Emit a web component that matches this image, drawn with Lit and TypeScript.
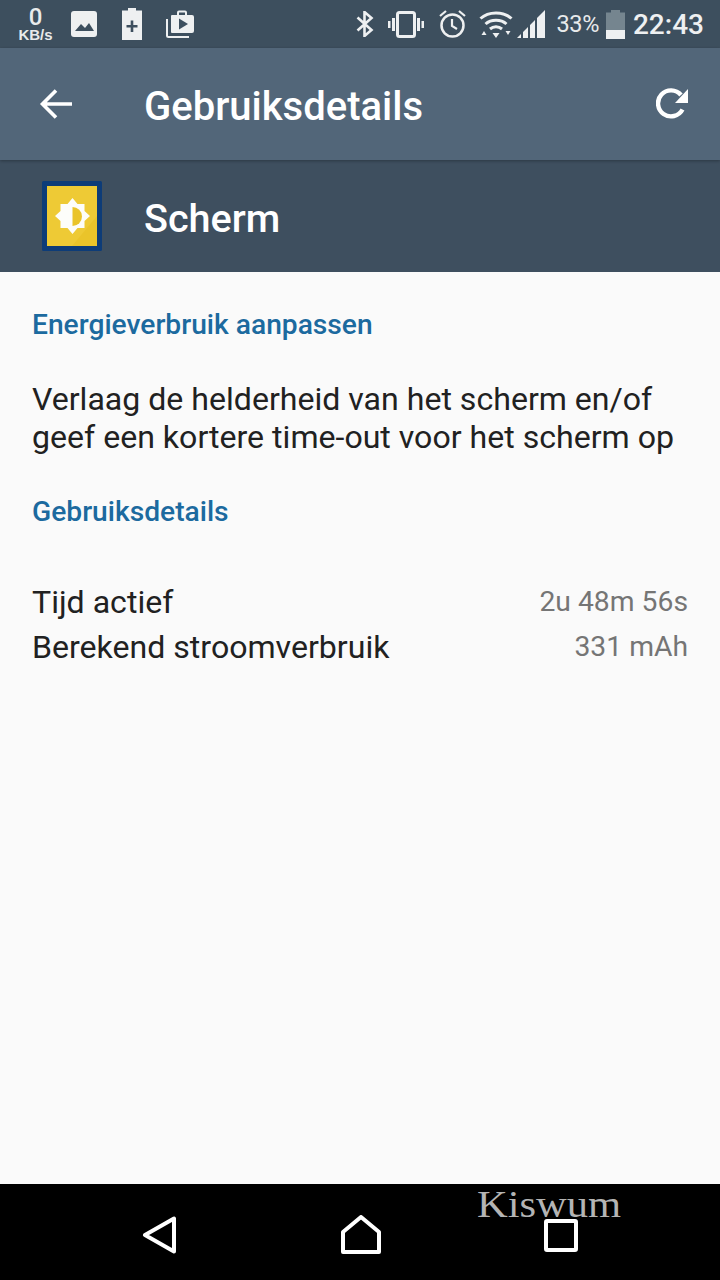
import { LitElement, html, css } from "lit";
import { customElement } from "lit/decorators.js";

@customElement("app-root")
export class AppRoot extends LitElement {
  static styles = css`
    :host { display: block; width: 720px; height: 1280px; font-family: Roboto, "Noto Sans", sans-serif; background: #fafafa; }
    .page { display: flex; flex-direction: column; height: 1280px; position: relative; overflow: hidden; }
    svg { display: block; flex: none; }
    .status { height: 48px; flex: none; background: #3d4f5e; color: #eef0f1; display: flex; align-items: center; padding-left: 18px; padding-right: 16px; box-sizing: border-box; }
    .speed { width: 35px; display: flex; flex-direction: column; align-items: center; color: #e8eaeb; }
    .speed b { font-size: 24px; line-height: 20px; font-weight: 500; }
    .speed span { font-family: "Liberation Sans", Arial, sans-serif; font-size: 15px; line-height: 15px; font-weight: 700; }
    .i1 { margin-left: 18px; }
    .i2 { margin-left: 25px; }
    .i3 { margin-left: 24px; }
    .spacer { flex: 1; }
    .i5 { margin-left: 14px; }
    .i6 { margin-left: 15px; }
    .i7 { margin-left: 13px; }
    .i8 { margin-left: 4px; }
    .pct { margin-left: 12px; font-size: 23.5px; letter-spacing: -0.4px; color: #e8eaeb; }
    .i9 { margin-left: 7px; }
    .clock { margin-left: 8px; font-size: 28px; font-weight: 500; color: #eef0f1; }
    .toolbar { height: 112px; flex: none; background: #526679; display: flex; align-items: center; color: #fff; box-sizing: border-box; padding: 0 30px 0 38px; box-shadow: 0 1px 3px rgba(0,0,0,.3); position: relative; }
    .toolbar h1 { margin: 0 0 0 70px; flex: 1; font-size: 40px; line-height: 48px; padding-top: 6px; font-weight: 500; }
    .sub { height: 112px; flex: none; background: #3e4f5f; display: flex; align-items: center; padding-left: 42px; color: #fff; }
    .sub h2 { margin: 0 0 0 42px; font-size: 39.6px; line-height: 48px; padding-top: 6px; font-weight: 500; }
    .content { flex: 1; padding: 36px 32px 0; background: #fafafa; color: #212121; }
    .head { font-size: 28.2px; line-height: 33px; font-weight: 500; color: #1c6a9f; }
    .desc { margin-top: 39px; font-size: 32.1px; line-height: 38px; }
    .head2 { margin-top: 39px; }
    .rows { margin-top: 51px; display: flex; flex-direction: column; }
    .row { display: flex; justify-content: space-between; align-items: center; height: 45px; font-size: 32.1px; }
    .row span:last-child { font-size: 28.3px; color: #757575; }
    .nav { height: 96px; flex: none; background: #000; position: relative; display: flex; align-items: center; padding-left: 142px; padding-top: 6px; box-sizing: border-box; }
    .nav .home { margin-left: 163px; }
    .nav .recent { margin-left: 163px; }
    .mark { position: absolute; left: 477px; top: 0; font-family: "Liberation Serif", "Times New Roman", serif; font-size: 37px; line-height: 42px; color: #b4b4b4; transform: scaleX(1.15); transform-origin: left center; }
  `;

  render() {
    return html`<div class="page">
      <div class="status">
        <div class="speed"><b>0</b><span>KB/s</span></div>
        <svg class="i1" width="26" height="26" viewBox="0 0 26 26"><path fill="#eef0f1" d="M3 0h20a3 3 0 0 1 3 3v20a3 3 0 0 1-3 3H3a3 3 0 0 1-3-3V3a3 3 0 0 1 3-3z"/><path fill="#3d4f5e" d="M4 20l6-7 4 4 4-5 5 8z"/></svg>
        <svg class="i2" width="20" height="32" viewBox="0 0 20 32"><path fill="#eef0f1" d="M6 0h8v2.500h6V32H0V2.500h6z"/><path fill="#3d4f5e" d="M8.700 12.500h2.600v4.500h4.200v2.600h-4.200v4.400H8.700v-4.400H4.500V17h4.200z"/></svg>
        <svg class="i3" width="28" height="28" viewBox="0 0 28 28"><path fill="none" stroke="#eef0f1" stroke-width="2" d="M1 9v16.500a1.500 1.500 0 0 0 1.500 1.500H23"/><path fill="#eef0f1" d="M6 5h5V2.500A2 2 0 0 1 13 .5h6a2 2 0 0 1 2 2V5h5a2 2 0 0 1 2 2v14a2 2 0 0 1-2 2H6a1 1 0 0 1-1-1V6a1 1 0 0 1 1-1zM13 2.500V5h6V2.500z"/><path fill="#3d4f5e" d="M13 8.500l9 5.500-9 5.500z"/></svg>
        <div class="spacer"></div>
        <svg width="18" height="26" viewBox="0 0 18 26"><path fill="none" stroke="#eef0f1" stroke-width="2.600" d="M1.500 6.500l14 12.500L8.500 25V1l7 6L1.500 19.500"/></svg>
        <svg class="i5" width="36" height="27" viewBox="0 0 36 27"><rect x="9.500" y="1.500" width="17" height="24" rx="2" fill="none" stroke="#eef0f1" stroke-width="3"/><path fill="#eef0f1" d="M4 7h3v13H4zM29 7h3v13h-3zM0 10h2.500v7H0zM33.500 10H36v7h-2.500z"/></svg>
        <svg class="i6" width="27" height="28" viewBox="0 0 27 28"><circle cx="13.500" cy="15.500" r="11" fill="none" stroke="#eef0f1" stroke-width="2.500"/><path fill="none" stroke="#eef0f1" stroke-width="2.200" d="M13 9v7l5 3M1 6l6-5M26 6l-6-5"/></svg>
        <svg class="i7" width="34" height="28" viewBox="0 0 34 28"><path fill="none" stroke="#eef0f1" stroke-width="3" d="M1.500 8.500C9.500 1 24.500 1 32.500 8.500M6.500 14C12 9 22 9 27.500 14"/><path fill="none" stroke="#eef0f1" stroke-width="3" d="M11 19c3.500-3 8.500-3 12 0"/><path fill="#eef0f1" d="M13.500 23h7L17 28zM2.500 25l2.500-4 2.500 4zM26.500 21h5L29 25z"/></svg>
        <svg class="i8" width="28" height="28" viewBox="0 0 28 28"><path fill="#eef0f1" d="M0 28l4-4v4zM6 28v-6l5-5v11zM13 28V15l5-5v18zM20 28V8l8-8v28z"/></svg>
        <span class="pct">33%</span>
        <svg class="i9" width="19" height="29" viewBox="0 0 19 29"><path fill="#75858f" d="M5 0h9v2.500h5V20H0V2.500h5z"/><rect y="20" width="19" height="9" fill="#eef0f1"/></svg>
        <span class="clock">22:43</span>
      </div>

      <div class="toolbar">
        <svg width="36" height="36" viewBox="0 0 36 36"><path fill="none" stroke="#fff" stroke-width="3.600" d="M34 18H5M18 4.500L4.500 18 18 31.500"/></svg>
        <h1>Gebruiksdetails</h1>
        <svg width="34" height="34" viewBox="0 0 34 34"><path fill="none" stroke="#fff" stroke-width="4.400" d="M26.500 22.500A13 13 0 1 1 25 8"/><path fill="#fff" d="M32 2v14H19z"/></svg>
      </div>

      <div class="sub">
        <svg width="60" height="70" viewBox="0 0 60 70">
          <rect width="60" height="70" rx="1.500" fill="#0d3c78"/>
          <rect x="5" y="5" width="50" height="60" fill="#eac42a"/>
          <path fill="#f1d040" d="M5 5h50v30L30 65H5z" opacity=".5"/>
          <path fill="#fdfdfa" d="M30.500 17l5 6h7v7l5.500 5-5.500 5v7h-7l-5 6-5-6h-7v-7L13 35l5.500-5v-7h7z"/>
          <path fill="#eac42a" d="M30.500 26a9.500 9.500 0 0 1 0 19z"/>
        </svg>
        <h2>Scherm</h2>
      </div>

      <div class="content">
        <div class="head">Energieverbruik aanpassen</div>
        <div class="desc">Verlaag de helderheid van het scherm en/of<br />geef een kortere time-out voor het scherm op</div>
        <div class="head head2">Gebruiksdetails</div>
        <div class="rows">
          <div class="row"><span>Tijd actief</span><span>2u 48m 56s</span></div>
          <div class="row"><span>Berekend stroomverbruik</span><span>331 mAh</span></div>
        </div>
      </div>

      <div class="nav">
        <svg width="36" height="38" viewBox="0 0 36 38"><path fill="none" stroke="#fff" stroke-width="4" stroke-linejoin="round" d="M32 2.500v33L3 19z"/></svg>
        <svg class="home" width="40" height="40" viewBox="0 0 40 40"><path fill="none" stroke="#fff" stroke-width="4" stroke-linejoin="round" d="M2 37V17L20 2l18 15v20z"/></svg>
        <svg class="recent" width="34" height="33" viewBox="0 0 34 33"><rect x="2" y="2" width="30" height="29" rx="1" fill="none" stroke="#fff" stroke-width="4"/></svg>
        <div class="mark">Kiswum</div>
      </div>
    </div>`;
  }
}
